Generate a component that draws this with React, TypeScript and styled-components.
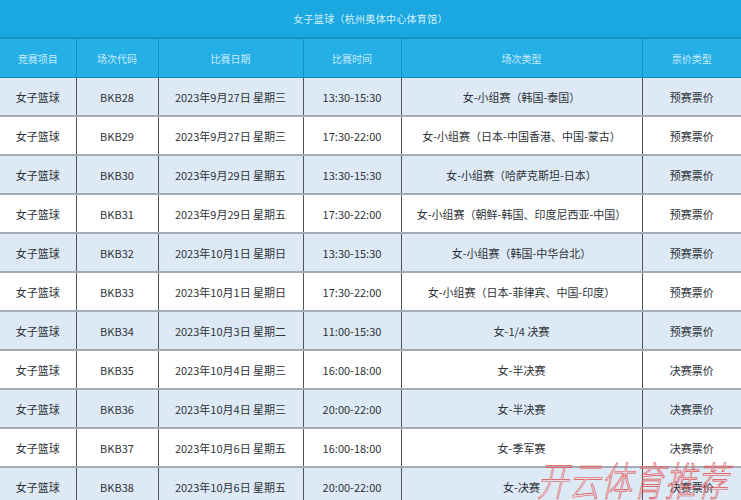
import styled, { createGlobalStyle } from "styled-components";

type Match = {
  code: string;
  date: string;
  time: string;
  type: string;
  price: string;
};

const GlobalStyle = createGlobalStyle`
  html, body {
    margin: 0;
    padding: 0;
    background: #ffffff;
  }
  body {
    font-family: "Noto Sans CJK SC", "Noto Sans", sans-serif;
  }
`;

const Page = styled.div`
  position: relative;
  width: 741px;
  height: 500px;
  overflow: hidden;
  background: #ffffff;
`;

const TitleBar = styled.div`
  height: 37px;
  display: flex;
  align-items: center;
  justify-content: center;
  background: #1ba8e0;
  border-bottom: 2px solid #1792c6;
  color: #d2f0fc;
  font-size: 10px;
  letter-spacing: 0.3px;
`;

const Table = styled.table`
  width: 741px;
  border-collapse: collapse;
  table-layout: fixed;
`;

const Col = styled.col<{ $w: number }>`
  width: ${(p) => p.$w}px;
`;

const HeadCell = styled.th`
  height: 38px;
  padding: 0;
  background: #25afe7;
  color: #c8eafa;
  font-size: 10px;
  font-weight: 400;
  text-align: center;
  border-left: 1px solid #168fc3;
  border-bottom: 1px solid #1a86b5;

  &:first-child {
    border-left: none;
  }
`;

const Row = styled.tr<{ $shaded: boolean }>`
  background: ${(p) => (p.$shaded ? "#dde9f5" : "#ffffff")};
`;

const Cell = styled.td`
  height: 37px;
  padding: 0;
  text-align: center;
  color: #2e3338;
  font-size: 11px;
  white-space: nowrap;
  border-left: 1px solid #4f5458;
  border-bottom: 2px solid #a4adb5;

  &:first-child {
    border-left: none;
  }
`;

const Watermark = styled.div`
  position: absolute;
  left: 534px;
  bottom: -8px;
  font-family: "Noto Sans CJK SC", sans-serif;
  font-size: 40px;
  font-weight: 300;
  letter-spacing: 1px;
  white-space: nowrap;
  color: rgba(255, 170, 170, 0.18);
  -webkit-text-stroke: 0.7px #e25050;
  transform: scaleX(0.78) skewX(-16deg);
  transform-origin: left bottom;
  pointer-events: none;
`;

const columns = [
  { label: "竞赛项目", w: 76 },
  { label: "场次代码", w: 82 },
  { label: "比赛日期", w: 145 },
  { label: "比赛时间", w: 98 },
  { label: "场次类型", w: 241 },
  { label: "票价类型", w: 99 },
];

const matches: Match[] = [
  { code: "BKB28", date: "2023年9月27日 星期三", time: "13:30-15:30", type: "女-小组赛（韩国-泰国）", price: "预赛票价" },
  { code: "BKB29", date: "2023年9月27日 星期三", time: "17:30-22:00", type: "女-小组赛（日本-中国香港、中国-蒙古）", price: "预赛票价" },
  { code: "BKB30", date: "2023年9月29日 星期五", time: "13:30-15:30", type: "女-小组赛（哈萨克斯坦-日本）", price: "预赛票价" },
  { code: "BKB31", date: "2023年9月29日 星期五", time: "17:30-22:00", type: "女-小组赛（朝鲜-韩国、印度尼西亚-中国）", price: "预赛票价" },
  { code: "BKB32", date: "2023年10月1日 星期日", time: "13:30-15:30", type: "女-小组赛（韩国-中华台北）", price: "预赛票价" },
  { code: "BKB33", date: "2023年10月1日 星期日", time: "17:30-22:00", type: "女-小组赛（日本-菲律宾、中国-印度）", price: "预赛票价" },
  { code: "BKB34", date: "2023年10月3日 星期二", time: "11:00-15:30", type: "女-1/4 决赛", price: "预赛票价" },
  { code: "BKB35", date: "2023年10月4日 星期三", time: "16:00-18:00", type: "女-半决赛", price: "决赛票价" },
  { code: "BKB36", date: "2023年10月4日 星期三", time: "20:00-22:00", type: "女-半决赛", price: "决赛票价" },
  { code: "BKB37", date: "2023年10月6日 星期五", time: "16:00-18:00", type: "女-季军赛", price: "决赛票价" },
  { code: "BKB38", date: "2023年10月6日 星期五", time: "20:00-22:00", type: "女-决赛", price: "决赛票价" },
];

export default function App() {
  return (
    <Page>
      <GlobalStyle />
      <TitleBar>女子篮球（杭州奥体中心体育馆）</TitleBar>
      <Table>
        <colgroup>
          {columns.map((c) => (
            <Col key={c.label} $w={c.w} />
          ))}
        </colgroup>
        <thead>
          <tr>
            {columns.map((c) => (
              <HeadCell key={c.label}>{c.label}</HeadCell>
            ))}
          </tr>
        </thead>
        <tbody>
          {matches.map((m, i) => (
            <Row key={m.code} $shaded={i % 2 === 0}>
              <Cell>女子篮球</Cell>
              <Cell>{m.code}</Cell>
              <Cell>{m.date}</Cell>
              <Cell>{m.time}</Cell>
              <Cell>{m.type}</Cell>
              <Cell>{m.price}</Cell>
            </Row>
          ))}
        </tbody>
      </Table>
      <Watermark>开云体育推荐</Watermark>
    </Page>
  );
}
